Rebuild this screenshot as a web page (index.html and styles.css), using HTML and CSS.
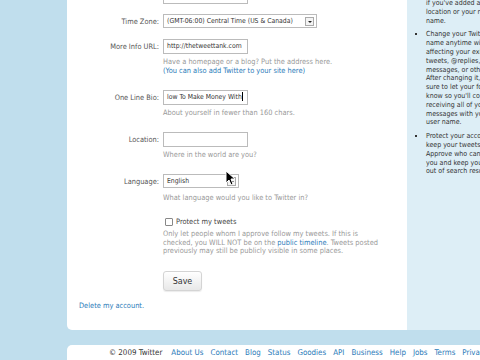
FILE: index.html
```html
<!DOCTYPE html>
<html lang="en">
<head>
  <meta charset="UTF-8">
  <title>Twitter / Settings</title>
  <link rel="stylesheet" href="styles.css">
</head>
<body>

<div class="wrap">
  <div class="container">
    <div class="content">
      <form class="settings">
        <div class="row row-first">
          <label class="lbl"></label>
          <div class="field"><div class="textbox">info@thetweettank.com</div></div>
        </div>

        <div class="row">
          <label class="lbl">Time Zone:</label>
          <div class="field">
            <div class="select select-wide"><span>(GMT-06:00) Central Time (US &amp; Canada)</span><span class="arrow"></span></div>
          </div>
        </div>

        <div class="row">
          <label class="lbl">More Info URL:</label>
          <div class="field">
            <div class="textbox">http://thetweettank.com</div>
            <p class="help">Have a homepage or a blog? Put the address here.<br><a href="#">(You can also add Twitter to your site here)</a></p>
          </div>
        </div>

        <div class="row">
          <label class="lbl">One Line Bio:</label>
          <div class="field">
            <div class="textbox">low To Make Money With<span class="caret"></span></div>
            <p class="help">About yourself in fewer than 160 chars.</p>
          </div>
        </div>

        <div class="row">
          <label class="lbl">Location:</label>
          <div class="field">
            <div class="textbox"></div>
            <p class="help">Where in the world are you?</p>
          </div>
        </div>

        <div class="row">
          <label class="lbl">Language:</label>
          <div class="field">
            <div class="select select-narrow"><span>English</span><span class="arrow"></span></div>
            <p class="help help-lang">What language would you like to Twitter in?</p>
          </div>
        </div>

        <div class="row row-protect">
          <span class="lbl"></span>
          <div class="field">
            <label class="check"><span class="box"></span>Protect my tweets</label>
            <p class="help help-long">Only let people whom I approve follow my tweets. If this is<br>checked, you WILL NOT be on the <a href="#">public timeline</a>. Tweets posted<br>previously may still be publicly visible in some places.</p>
            <button type="button" class="save">Save</button>
          </div>
        </div>
      </form>

      <a class="delete" href="#">Delete my account.</a>
    </div>

    <div class="sidebar">
      <ul>
        <li>Use your real name, so people<br>can recognize you, even<br>if you've added a<br>location or your real<br>name.</li>
        <li>Change your Twitter user<br>name anytime without<br>affecting your existing<br>tweets, @replies, direct<br>messages, or other data.<br>After changing it, make<br>sure to let your followers<br>know so you'll continue<br>receiving all of your<br>messages with your new<br>user name.</li>
        <li>Protect your account to<br>keep your tweets private.<br>Approve who can follow<br>you and keep your tweets<br>out of search results.</li>
      </ul>
    </div>
  </div>

  <div class="footer">
    <span class="copy">&copy; 2009 Twitter</span>
    <a href="#">About Us</a>
    <a href="#">Contact</a>
    <a href="#">Blog</a>
    <a href="#">Status</a>
    <a href="#">Goodies</a>
    <a href="#">API</a>
    <a href="#">Business</a>
    <a href="#">Help</a>
    <a href="#">Jobs</a>
    <a href="#">Terms</a>
    <a href="#">Privacy</a>
  </div>
</div>

<!-- mouse pointer caught in the frame -->
<svg class="cursor" width="11" height="16" viewBox="0 0 11 16">
  <path d="M1 1 L1 13 L4 10 L6 15 L8 14 L6 9 L10 9 Z" fill="#000" stroke="#fff" stroke-width="1"/>
</svg>

</body>
</html>
```

FILE: styles.css
```css
body {
  margin: 0;
  height: 360px;
  overflow: hidden;
  background: #c0deed;
  font-family: "DejaVu Sans Condensed", "DejaVu Sans", sans-serif;
  color: #333;
}
a {
  color: #2b7bb9;
  text-decoration: none;
}
.wrap {
  margin-left: 67px;
  width: 413px;
}
.container {
  display: flex;
  height: 330px;
  background: #fff;
  border-bottom-left-radius: 5px;
  overflow: hidden;
}
.content {
  width: 340px;
  flex: none;
  padding-left: 12px;
  box-sizing: border-box;
}

/* form rows */
.row {
  display: grid;
  grid-template-columns: 80px 1fr;
  column-gap: 4px;
  margin-bottom: 10px;
}
.row-first {
  margin-top: -11px;
}
.lbl {
  text-align: right;
  font-size: 7.4px;
  line-height: 15px;
  color: #555;
  white-space: nowrap;
}
.textbox {
  width: 85px;
  height: 15px;
  box-sizing: border-box;
  border: 1px solid #bbb;
  padding-left: 3px;
  font-size: 6.8px;
  line-height: 13px;
  color: #333;
  white-space: nowrap;
  overflow: hidden;
}
.caret {
  display: inline-block;
  width: 1px;
  height: 9px;
  background: #000;
  vertical-align: -2px;
}
.select {
  display: flex;
  align-items: center;
  height: 14px;
  box-sizing: border-box;
  border: 1px solid #bbb;
  padding-left: 3px;
  font-size: 6.8px;
  color: #333;
  white-space: nowrap;
}
.select-wide {
  width: 154px;
}
.select-narrow {
  width: 76px;
}
.select .arrow {
  margin-left: auto;
  margin-right: 2px;
  width: 7px;
  height: 7px;
  border: 1px solid #aaa;
  background: #f4f4f4;
  position: relative;
}
.select .arrow::after {
  content: "";
  position: absolute;
  left: 1.5px;
  top: 3px;
  border-left: 2px solid transparent;
  border-right: 2px solid transparent;
  border-top: 2px solid #222;
}
.help {
  margin: 3px 0 5px;
  font-size: 7.4px;
  line-height: 9px;
  color: #999;
  white-space: nowrap;
}
.help-lang {
  margin-top: 4.5px;
}

.row-protect {
  margin-top: 4.5px;
}
.check {
  display: flex;
  align-items: center;
  gap: 3px;
  height: 10px;
  padding-left: 2px;
  font-size: 7.4px;
  color: #444;
}
.check .box {
  width: 6px;
  height: 6px;
  border: 1px solid #888;
  border-radius: 1px;
  background: #fff;
}
.help-long {
  margin-top: 3.5px;
  line-height: 8.7px;
}
.save {
  display: block;
  margin-top: 15px;
  width: 39px;
  height: 20px;
  padding: 0;
  border: 1px solid #d4d4d4;
  border-radius: 3px;
  background: linear-gradient(#fff, #e8e8e8);
  box-shadow: 0 1px 1px rgba(0,0,0,0.08);
  font-family: inherit;
  font-size: 8.9px;
  color: #333;
}
.delete {
  display: block;
  font-size: 7.4px;
  line-height: 10px;
}

/* tips column */
.sidebar {
  flex: 1;
  background: #ddeef6;
}
.sidebar ul {
  margin: -18.5px 0 0;
  padding-left: 19px;
  list-style: square;
  font-size: 7px;
  line-height: 8.8px;
  white-space: nowrap;
}
.sidebar li {
  margin-bottom: 5px;
}

.footer {
  display: flex;
  gap: 7px;
  margin-top: 15px;
  height: 20px;
  padding: 3px 0 0 42px;
  box-sizing: border-box;
  background: #fff;
  border-top-left-radius: 5px;
  font-size: 7.9px;
  line-height: 10px;
  white-space: nowrap;
}
.footer .copy {
  margin-right: 2px;
}

.cursor {
  position: absolute;
  left: 225px;
  top: 170px;
}
```
